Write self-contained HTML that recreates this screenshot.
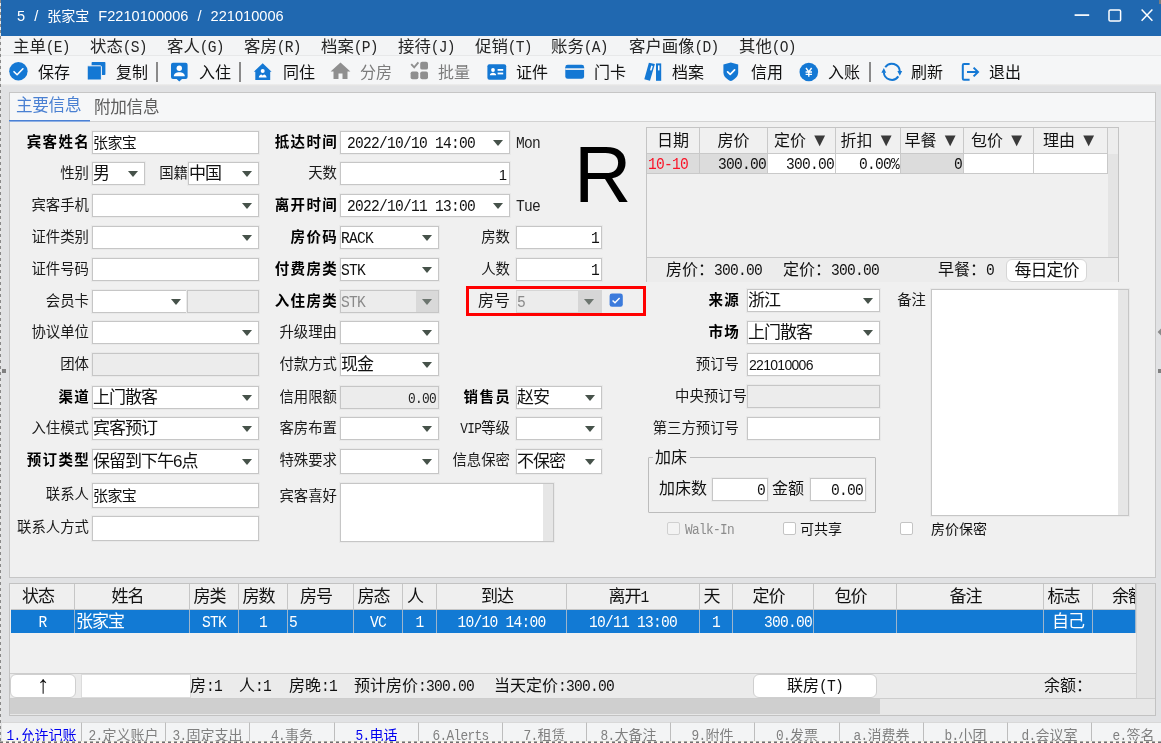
<!DOCTYPE html>
<html lang="zh-CN"><head><meta charset="utf-8"><title>5 / 张家宝 F2210100006 / 221010006</title>
<style>
*{box-sizing:border-box;margin:0;padding:0}
html,body{width:1161px;height:743px;overflow:hidden;background:#dcdcdc}
body{font-family:"Liberation Sans","Noto Sans CJK SC",sans-serif;color:#111;position:relative;font-size:14px}
#w{position:absolute;left:0;top:0;width:1161px;height:743px;overflow:hidden;background:#e1e2e4;will-change:transform}
#w div,#w span.a{position:absolute;white-space:nowrap}
.s{font-family:"Liberation Mono","Noto Sans CJK SC",monospace}
.m{font-family:"Liberation Mono",monospace;font-size:14.6px;letter-spacing:-.76px;display:inline-block;transform:scaleY(1.18);transform-origin:50% 58%}
.m14{font-family:"Liberation Mono",monospace;font-size:12.8px;letter-spacing:-.68px;display:inline-block;transform:scaleY(1.16);transform-origin:50% 58%}
.l{height:24px;line-height:24px;font-size:14.4px;text-align:right;color:#1a1a1a;font-weight:400;margin-right:-1px}
.l.b{font-weight:700;font-size:14.5px;letter-spacing:1.3px;color:#000;margin-right:-2px}
.l.g{font-size:16px}
.i{background:#fff;border:1px solid #c6c6c6;font-size:17px;letter-spacing:-1px;line-height:21px;height:23px;padding-left:0;color:#111;box-shadow:0 0 0 1px #e9e9e9}
.i.d{background:#ececec;color:#8a8a8a}
.i.r{text-align:right;padding-right:2px}
.i.f14{font-size:15px;letter-spacing:-.6px}
.ar{width:0;height:0;border-left:5px solid transparent;border-right:5px solid transparent;border-top:6px solid #46524a}
.tb{font-size:16px;height:30px;line-height:33px;top:56px;color:#111}
.tb.g{color:#7c7c7c}
.mi{font-size:16.4px;top:36px;height:20px;line-height:21px;color:#262626}
.th{font-size:16px;text-align:center;color:#111;background:#f0f0f0;border-right:1px solid #c9c9c9;border-bottom:1px solid #c9c9c9}
.td{font-size:16px;border-right:1px solid #c9c9c9;border-bottom:1px solid #c9c9c9}
.cb{width:13px;height:13px;background:#fff;border:1px solid #c4c4c4;border-radius:2px}
.bt{font-size:14px;color:#808080;top:722px;height:22px;line-height:25px;border-top:1px solid #d8d8d8;text-align:center;border-left:1px solid #bdbdbd;background:#f3f4f5}
.bt.on{color:#0000f0}
.gh{font-size:17px;letter-spacing:-1px;padding-right:9px;text-align:center;top:584px;height:26px;line-height:25px;background:#efefef;border-right:1px solid #c6c6c6;border-bottom:1px solid #c6c6c6;color:#111}
.gr{font-size:17px;letter-spacing:-1px;text-align:center;top:610px;height:23px;line-height:23px;background:#127ad4;border-right:1px solid #9db5cc;color:#fff}
</style></head><body><div id="w">
<div style="left:0px;top:0px;width:1161px;height:36px;background:#2068b0"></div>
<div style="left:1159px;top:0px;width:2px;height:4px;background:#7d7d7d"></div>
<div style="left:17px;top:0;height:34px;line-height:33px;font-size:14.6px;color:#fff;word-spacing:5px">5 / <span style="font-size:14px">张家宝</span> F2210100006 / 221010006</div>
<svg style="position:absolute;left:1070px;top:5px" width="88" height="24" viewBox="0 0 88 24"><path d="M4.6 10.1h14.6" stroke="#fff" stroke-width="1.7" fill="none"/><rect x="39" y="4.9" width="11.6" height="11.2" rx="1.4" stroke="#fff" stroke-width="1.5" fill="none"/><path d="M71.6 4.6l10.8 11.2M82.4 4.600l-10.800 11.200" stroke="#fff" stroke-width="1.5" fill="none"/></svg>
<div style="left:0px;top:36px;width:1161px;height:20px;background:#f3f4f5;border-bottom:1px solid #e7e8e9"></div>
<div class="mi" style="left:13px">主单<span class="m">(E)</span></div>
<div class="mi" style="left:90px">状态<span class="m">(S)</span></div>
<div class="mi" style="left:167px">客人<span class="m">(G)</span></div>
<div class="mi" style="left:244px">客房<span class="m">(R)</span></div>
<div class="mi" style="left:321px">档案<span class="m">(P)</span></div>
<div class="mi" style="left:398px">接待<span class="m">(J)</span></div>
<div class="mi" style="left:475px">促销<span class="m">(T)</span></div>
<div class="mi" style="left:551px">账务<span class="m">(A)</span></div>
<div class="mi" style="left:629px">客户画像<span class="m">(D)</span></div>
<div class="mi" style="left:739px">其他<span class="m">(O)</span></div>
<div style="left:0px;top:56px;width:1161px;height:30px;background:#f5f6f7"></div>
<div style="left:0px;top:84px;width:1161px;height:2px;background:linear-gradient(#efefef,#e2e2e2)"></div>
<div style="left:0px;top:86px;width:1161px;height:6px;background:#e1e2e4"></div>
<div class="tb" style="left:38px">保存</div>
<div class="tb" style="left:116px">复制</div>
<div class="tb" style="left:199px">入住</div>
<div class="tb" style="left:283px">同住</div>
<div class="tb g" style="left:360px">分房</div>
<div class="tb g" style="left:438px">批量</div>
<div class="tb" style="left:516px">证件</div>
<div class="tb" style="left:594px">门卡</div>
<div class="tb" style="left:672px">档案</div>
<div class="tb" style="left:751px">信用</div>
<div class="tb" style="left:828px">入账</div>
<div class="tb" style="left:911px">刷新</div>
<div class="tb" style="left:989px">退出</div>
<div style="left:156px;top:62px;width:2px;height:20px;background:#8a8a8a"></div>
<div style="left:239px;top:62px;width:2px;height:20px;background:#8a8a8a"></div>
<div style="left:869px;top:62px;width:2px;height:20px;background:#8a8a8a"></div>
<svg style="position:absolute;left:9px;top:62px" width="19" height="19" viewBox="0 0 19 19"><circle cx="9.4" cy="9.3" r="9.2" fill="#1478d4"/><path d="M5 9.7l3.1 3 5.8-5.9" stroke="#fff" stroke-width="1.6" fill="none" stroke-linecap="round" stroke-linejoin="round"/></svg>
<svg style="position:absolute;left:87px;top:61px" width="20" height="20" viewBox="0 0 20 20"><rect x="4.6" y="1" width="13.8" height="13" rx="0.8" fill="#1478d4"/><rect x="0.2" y="4.8" width="14.2" height="14.2" rx="1" fill="#1478d4" stroke="#f6f6f7" stroke-width="1"/></svg>
<svg style="position:absolute;left:170px;top:62px" width="19" height="20" viewBox="0 0 19 20"><path d="M3 0.8h12.6a2 2 0 0 1 2 2v12.2a2 2 0 0 1-2 2h-3.6l-2.7 2.6-2.7-2.6H3a2 2 0 0 1-2-2V2.8a2 2 0 0 1 2-2z" fill="#1478d4"/><circle cx="9.3" cy="6.3" r="2.7" fill="#fff"/><path d="M3.8 14.2c0-2.6 2.6-3.9 5.5-3.9s5.5 1.3 5.5 3.9z" fill="#fff"/></svg>
<svg style="position:absolute;left:253px;top:62px" width="20" height="19" viewBox="0 0 20 19"><path d="M9.7 1.2L0.8 9.8H2.3V18H17.2V9.8H18.6z" fill="#1478d4"/><circle cx="9.7" cy="9" r="2" fill="#fff"/><path d="M5.8 15.6c0-2 1.3-3 2.6-3.2l1.3 1 1.3-1c1.3.2 2.6 1.2 2.6 3.2z" fill="#fff"/></svg>
<svg style="position:absolute;left:330px;top:62px" width="21" height="18" viewBox="0 0 21 18"><path d="M10.5 0.6L0.6 9.4h2.9V17h5V11.6h4V17h5V9.4h2.9z" fill="#8f8f8f"/></svg>
<svg style="position:absolute;left:410px;top:61px" width="19" height="19" viewBox="0 0 19 19"><path d="M1.2 3.2l3 3.2 4.2-5" stroke="#8f8f8f" stroke-width="1.9" fill="none"/><rect x="10.2" y="0.8" width="7.8" height="7.8" rx="1.9" fill="#8f8f8f"/><rect x="0.6" y="10.4" width="7.8" height="7.8" rx="1.9" fill="#8f8f8f"/><rect x="10.2" y="10.4" width="7.8" height="7.8" rx="1.9" fill="#8f8f8f"/></svg>
<svg style="position:absolute;left:487px;top:64px" width="20" height="16" viewBox="0 0 20 16"><rect x="0.4" y="0.3" width="18.8" height="15.4" rx="2" fill="#1478d4"/><circle cx="6" cy="6" r="1.9" fill="#fff"/><path d="M2.8 11.3c0-1.8 1.4-2.6 3.2-2.6s3.2.8 3.2 2.6z" fill="#fff"/><rect x="10.6" y="5" width="5.6" height="1.8" fill="#fff"/><rect x="10.6" y="8.6" width="5.6" height="1.8" fill="#fff"/></svg>
<svg style="position:absolute;left:565px;top:64px" width="20" height="15" viewBox="0 0 20 15"><rect x="0.3" y="0.8" width="18.8" height="14" rx="2.4" fill="#1478d4"/><rect x="0.3" y="4.3" width="18.8" height="1.6" fill="#f6f6f7"/></svg>
<svg style="position:absolute;left:643px;top:62px" width="20" height="19" viewBox="0 0 20 19"><path d="M5.9 0.7l6 1.4-4.9 16.7-5.7-1.6z" fill="#1478d4"/><rect x="13" y="1.4" width="5.2" height="17.4" fill="#1478d4"/><rect x="15" y="3.4" width="1.5" height="5" fill="#fff"/><path d="M8.3 3.6l1.5.4-1.3 4.6-1.5-.4z" fill="#fff"/></svg>
<svg style="position:absolute;left:722px;top:62px" width="18" height="20" viewBox="0 0 18 20"><path d="M8.8 0.4L1.4 2.6v7.6c0 4.2 3.2 7 7.4 8.9 4.2-1.9 7.4-4.7 7.4-8.9V2.6z" fill="#1478d4"/><path d="M5.6 9.8l2.6 2.6 4.4-4.6" stroke="#fff" stroke-width="1.7" fill="none" stroke-linecap="round" stroke-linejoin="round"/></svg>
<svg style="position:absolute;left:799px;top:62px" width="20" height="20" viewBox="0 0 20 20"><circle cx="9.8" cy="10" r="9.3" fill="#1478d4"/><path d="M7 6l2.8 3.8L12.6 6M6.6 10h6.4M6.6 12.4h6.4M9.8 9.8v5" stroke="#fff" stroke-width="1.4" fill="none"/></svg>
<svg style="position:absolute;left:881px;top:61px" width="22" height="22" viewBox="0 0 22 22"><path d="M4.25 6.2A8 8 0 0 1 18.8 10.3M17.35 15.4A8 8 0 0 1 2.8 11.3" stroke="#1478d4" stroke-width="2" fill="none"/><path d="M16.4 10h4.8l-2.4 4.8z" fill="#1478d4"/><path d="M0.4 11.7h4.8l-2.4-4.8z" fill="#1478d4"/></svg>
<svg style="position:absolute;left:961px;top:62px" width="19" height="20" viewBox="0 0 19 20"><path d="M8.6 2H3a1.2 1.2 0 0 0-1.200 1.200V16.600A1.200 1.200 0 0 0 3 17.800H8.600" stroke="#1478d4" stroke-width="2" fill="none"/><path d="M6 10h10.600M12.600 5.600l4.400 4.400-4.400 4.400" stroke="#1478d4" stroke-width="2" fill="none"/></svg>
<div style="left:9px;top:92px;width:1147px;height:486px;background:#f0f0f0;border:1px solid #c6c6c6"></div>
<div style="left:10px;top:93px;width:1145px;height:28px;background:#f6f7f8"></div>
<div style="left:10px;top:121px;width:1145px;height:1px;background:#d2d2d2"></div>
<div style="left:9px;top:120px;width:81px;height:1px;background:#4a80d4"></div>
<div style="left:9px;top:121px;width:81px;height:1px;background:#8fb0e4"></div>
<div style="left:16px;top:94px;height:24px;line-height:24px;font-size:16.6px;letter-spacing:-.3px;color:#4a80d2">主要信息</div>
<div style="left:94px;top:96px;height:24px;line-height:24px;font-size:16.6px;letter-spacing:-.3px;color:#5c5c5c">附加信息</div>
<div class="l b" style="right:1073px;top:130px;height:24px;line-height:24px">宾客姓名</div>
<div class="i f14" style="left:92px;top:131px;width:167px;height:23px;line-height:22px;">张家宝</div>
<div class="l" style="right:1073px;top:161px;height:24px;line-height:24px">性别</div>
<div class="i" style="left:92px;top:162px;width:53px;height:23px;line-height:22px;">男<div class="ar" style="right:6.5px;top:8px"></div></div>
<div class="l" style="right:974px;top:161px;height:24px;line-height:24px">国籍</div>
<div class="i" style="left:188px;top:162px;width:71px;height:23px;line-height:22px;">中国<div class="ar" style="right:6.5px;top:8px"></div></div>
<div class="l" style="right:1073px;top:193px;height:24px;line-height:24px">宾客手机</div>
<div class="i" style="left:92px;top:194px;width:167px;height:23px;line-height:22px;"><div class="ar" style="right:6.5px;top:8px"></div></div>
<div class="l" style="right:1073px;top:225px;height:24px;line-height:24px">证件类别</div>
<div class="i" style="left:92px;top:226px;width:167px;height:23px;line-height:22px;"><div class="ar" style="right:6.5px;top:8px"></div></div>
<div class="l" style="right:1073px;top:257px;height:24px;line-height:24px">证件号码</div>
<div class="i" style="left:92px;top:258px;width:167px;height:23px;line-height:22px;"></div>
<div class="l" style="right:1073px;top:289px;height:24px;line-height:24px">会员卡</div>
<div class="i" style="left:92px;top:290px;width:96px;height:23px;line-height:22px;"><div class="ar" style="right:6.5px;top:8px"></div></div>
<div class="i d" style="left:187px;top:290px;width:72px;height:23px;line-height:22px;"></div>
<div class="l" style="right:1073px;top:320px;height:24px;line-height:24px">协议单位</div>
<div class="i" style="left:92px;top:321px;width:167px;height:23px;line-height:22px;"><div class="ar" style="right:6.5px;top:8px"></div></div>
<div class="l" style="right:1073px;top:352px;height:24px;line-height:24px">团体</div>
<div class="i d" style="left:92px;top:353px;width:167px;height:23px;line-height:22px;"></div>
<div class="l b" style="right:1073px;top:385px;height:24px;line-height:24px">渠道</div>
<div class="i" style="left:92px;top:386px;width:167px;height:23px;line-height:22px;">上门散客<div class="ar" style="right:6.5px;top:8px"></div></div>
<div class="l" style="right:1073px;top:416px;height:24px;line-height:24px">入住模式</div>
<div class="i" style="left:92px;top:417px;width:167px;height:23px;line-height:22px;">宾客预订<div class="ar" style="right:6.5px;top:8px"></div></div>
<div class="l b" style="right:1073px;top:448px;height:24px;line-height:24px">预订类型</div>
<div class="i" style="left:92px;top:449px;width:167px;height:25px;line-height:24px;">保留到下午6点<div class="ar" style="right:6.5px;top:9px"></div></div>
<div class="l" style="right:1073px;top:482px;height:24px;line-height:24px">联系人</div>
<div class="i f14" style="left:92px;top:483px;width:167px;height:25px;line-height:24px;">张家宝</div>
<div class="l" style="right:1073px;top:515px;height:24px;line-height:24px">联系人方式</div>
<div class="i" style="left:92px;top:516px;width:167px;height:25px;line-height:24px;"></div>
<div class="l b" style="right:825px;top:130px;height:24px;line-height:24px">抵达时间</div>
<div class="i" style="left:340px;top:131px;width:170px;height:23px;line-height:22px;padding-left:6px"><span class="m">2022/10/10 14:00</span><div class="ar" style="right:6.5px;top:8px"></div></div>
<div style="left:516px;top:131px;height:24px;line-height:24px;font-size:16px;color:#222"><span class="m">Mon</span></div>
<div class="l" style="right:825px;top:161px;height:24px;line-height:24px">天数</div>
<div class="i r f14" style="left:340px;top:162px;width:170px;height:23px;line-height:22px;padding-right:2px;letter-spacing:0;line-height:24px">1</div>
<div class="l b" style="right:825px;top:193px;height:24px;line-height:24px">离开时间</div>
<div class="i" style="left:340px;top:194px;width:170px;height:23px;line-height:22px;padding-left:6px"><span class="m">2022/10/11 13:00</span><div class="ar" style="right:6.5px;top:8px"></div></div>
<div style="left:516px;top:194px;height:24px;line-height:24px;font-size:16px;color:#222"><span class="m">Tue</span></div>
<div class="l b" style="right:825px;top:225px;height:24px;line-height:24px">房价码</div>
<div class="i" style="left:340px;top:226px;width:99px;height:23px;line-height:22px;"><span class="m">RACK</span><div class="ar" style="right:6.5px;top:8px"></div></div>
<div class="l b" style="right:825px;top:257px;height:24px;line-height:24px">付费房类</div>
<div class="i" style="left:340px;top:258px;width:99px;height:23px;line-height:22px;"><span class="m">STK</span><div class="ar" style="right:6.5px;top:8px"></div></div>
<div class="l b" style="right:825px;top:289px;height:24px;line-height:24px">入住房类</div>
<div class="i d" style="left:340px;top:290px;width:99px;height:23px;line-height:22px;"><span class="m">STK</span><div class="ar" style="right:6.5px;top:8px"></div></div>
<div style="left:416px;top:291px;width:22px;height:21px;background:#d9d9d9"></div>
<div class="ar" style="left:422px;top:299px;border-top-color:#6c756f"></div>
<div class="l" style="right:825px;top:320px;height:24px;line-height:24px">升级理由</div>
<div class="i" style="left:340px;top:321px;width:99px;height:23px;line-height:22px;"><div class="ar" style="right:6.5px;top:8px"></div></div>
<div class="l" style="right:825px;top:352px;height:24px;line-height:24px">付款方式</div>
<div class="i" style="left:340px;top:353px;width:99px;height:23px;line-height:22px;">现金<div class="ar" style="right:6.5px;top:8px"></div></div>
<div class="l" style="right:825px;top:385px;height:24px;line-height:24px">信用限额</div>
<div class="i d r" style="left:340px;top:386px;width:99px;height:23px;line-height:22px;color:#222"><span class="m14">0.00</span></div>
<div class="l" style="right:825px;top:416px;height:24px;line-height:24px">客房布置</div>
<div class="i" style="left:340px;top:417px;width:99px;height:23px;line-height:22px;"><div class="ar" style="right:6.5px;top:8px"></div></div>
<div class="l" style="right:825px;top:448px;height:24px;line-height:24px">特殊要求</div>
<div class="i" style="left:340px;top:449px;width:99px;height:25px;line-height:24px;"><div class="ar" style="right:6.5px;top:9px"></div></div>
<div class="l" style="right:825px;top:484px;height:24px;line-height:24px">宾客喜好</div>
<div class="i" style="left:340px;top:483px;width:214px;height:59px;line-height:58px;"></div>
<div style="left:543px;top:484px;width:10px;height:57px;background:#e6e6e6"></div>
<div class="l" style="right:652px;top:225px;height:24px;line-height:24px">房数</div>
<div class="i r" style="left:516px;top:226px;width:86px;height:23px;line-height:22px;"><span class="m">1</span></div>
<div class="l" style="right:652px;top:257px;height:24px;line-height:24px">人数</div>
<div class="i r" style="left:516px;top:258px;width:86px;height:23px;line-height:22px;"><span class="m">1</span></div>
<div style="left:466px;top:286px;width:180px;height:30px;border:3px solid #ff0000"></div>
<div class="l g" style="right:652px;top:289px;height:24px;line-height:24px">房号</div>
<div class="i d" style="left:516px;top:290px;width:86px;height:23px;line-height:22px;box-shadow:none;border-color:#d6d6d6"><span class="m">5</span></div>
<div style="left:578px;top:291px;width:23px;height:21px;background:#d6d6d6"></div>
<div class="ar" style="left:584px;top:299px;border-top-color:#6c756f"></div>
<svg style="position:absolute;left:609px;top:293px" width="14" height="15" viewBox="0 0 14 15"><rect x="0.6" y="0.5" width="13.2" height="13.3" rx="2.4" fill="#3c7bdc"/><path d="M3.6 7.4l2.4 2.4 4.6-4.8" stroke="#fff" stroke-width="1.4" fill="none"/></svg>
<div class="l b" style="right:652px;top:385px;height:24px;line-height:24px">销售员</div>
<div class="i" style="left:516px;top:386px;width:86px;height:23px;line-height:22px;">赵安<div class="ar" style="right:6.5px;top:8px"></div></div>
<div class="l" style="right:652px;top:416px;height:24px;line-height:24px"><span class="m14">VIP</span>等级</div>
<div class="i" style="left:516px;top:417px;width:86px;height:23px;line-height:22px;"><div class="ar" style="right:6.5px;top:8px"></div></div>
<div class="l" style="right:652px;top:448px;height:24px;line-height:24px">信息保密</div>
<div class="i" style="left:516px;top:449px;width:86px;height:25px;line-height:24px;">不保密<div class="ar" style="right:6.5px;top:9px"></div></div>
<div style="left:646px;top:127px;width:473px;height:155px;background:#f0f0f0;border:1px solid #c4c4c4;border-bottom:none"></div>
<div class="th" style="left:647px;top:128px;width:53px;height:26px;line-height:26px">日期</div>
<div class="th" style="left:700px;top:128px;width:68px;height:26px;line-height:26px">房价</div>
<div class="th" style="left:768px;top:128px;width:68px;height:26px;line-height:26px">定价 <span style="font-size:18.5px;color:#3a3a3a;position:relative;top:0px;line-height:10px">▼</span></div>
<div class="th" style="left:836px;top:128px;width:65px;height:26px;line-height:26px">折扣 <span style="font-size:18.5px;color:#3a3a3a;position:relative;top:0px;line-height:10px">▼</span></div>
<div class="th" style="left:901px;top:128px;width:63px;height:26px;line-height:26px">早餐 <span style="font-size:18.5px;color:#3a3a3a;position:relative;top:0px;line-height:10px">▼</span></div>
<div class="th" style="left:964px;top:128px;width:70px;height:26px;line-height:26px">包价 <span style="font-size:18.5px;color:#3a3a3a;position:relative;top:0px;line-height:10px">▼</span></div>
<div class="th" style="left:1034px;top:128px;width:74px;height:26px;line-height:26px">理由 <span style="font-size:18.5px;color:#3a3a3a;position:relative;top:0px;line-height:10px">▼</span></div>
<div class="td" style="left:647px;top:154px;width:53px;height:20px;background:#dcdcdc;color:#fa1428;text-align:left;line-height:19px;padding:0 1px"><span class="m">10-10</span></div>
<div class="td" style="left:700px;top:154px;width:68px;height:20px;background:#dcdcdc;color:#111;text-align:right;line-height:19px;padding:0 1px"><span class="m">300.00</span></div>
<div class="td" style="left:768px;top:154px;width:68px;height:20px;background:#fff;color:#111;text-align:right;line-height:19px;padding:0 1px"><span class="m">300.00</span></div>
<div class="td" style="left:836px;top:154px;width:65px;height:20px;background:#fff;color:#111;text-align:right;line-height:19px;padding:0 1px"><span class="m">0.00%</span></div>
<div class="td" style="left:901px;top:154px;width:63px;height:20px;background:#dcdcdc;color:#111;text-align:right;line-height:19px;padding:0 1px"><span class="m">0</span></div>
<div class="td" style="left:964px;top:154px;width:70px;height:20px;background:#fff;color:#111;text-align:right;line-height:19px;padding:0 1px"></div>
<div class="td" style="left:1034px;top:154px;width:74px;height:20px;background:#fff;color:#111;text-align:right;line-height:19px;padding:0 1px"></div>
<div style="left:1108px;top:128px;width:10px;height:129px;background:#e4e4e4"></div>
<div style="left:1108px;top:128px;width:10px;height:26px;background:#ededed"></div>
<div style="left:647px;top:257px;width:471px;height:25px;background:#ececec;border-top:1px solid #c9c9c9"></div>
<div style="left:666px;top:258px;height:24px;line-height:24px;font-size:16px">房价：<span class="m">300.00</span></div>
<div style="left:783px;top:258px;height:24px;line-height:24px;font-size:16px">定价：<span class="m">300.00</span></div>
<div style="left:938px;top:258px;height:24px;line-height:24px;font-size:16px">早餐：<span class="m">0</span></div>
<div style="left:1006px;top:259px;width:81px;height:23px;background:#fff;border:1px solid #d6d6d6;border-radius:6px;font-size:17px;letter-spacing:-1px;line-height:22px;text-align:center">每日定价</div>
<div class="l b" style="right:423px;top:288px;height:24px;line-height:24px">来源</div>
<div class="i" style="left:747px;top:289px;width:133px;height:23px;line-height:22px;">浙江<div class="ar" style="right:6.5px;top:8px"></div></div>
<div class="l b" style="right:423px;top:320px;height:24px;line-height:24px">市场</div>
<div class="i" style="left:747px;top:321px;width:133px;height:23px;line-height:22px;">上门散客<div class="ar" style="right:6.5px;top:8px"></div></div>
<div class="l" style="right:423px;top:352px;height:24px;line-height:24px">预订号</div>
<div class="i" style="left:747px;top:353px;width:133px;height:23px;line-height:22px;padding-left:1px"><span style="font-size:14px;letter-spacing:-.7px">221010006</span></div>
<div class="l" style="right:415px;top:384px;height:24px;line-height:24px">中央预订号</div>
<div class="i d" style="left:747px;top:385px;width:133px;height:23px;line-height:22px;"></div>
<div class="l" style="right:423px;top:416px;height:24px;line-height:24px">第三方预订号</div>
<div class="i" style="left:747px;top:417px;width:133px;height:23px;line-height:22px;"></div>
<div class="l" style="right:236px;top:288px;height:24px;line-height:24px">备注</div>
<div class="i" style="left:931px;top:289px;width:198px;height:227px;line-height:226px;"></div>
<div style="left:1118px;top:290px;width:10px;height:225px;background:#e6e6e6"></div>
<div style="left:648px;top:457px;width:228px;height:56px;border:1px solid #bcbcbc;border-radius:1px"></div>
<div style="left:653px;top:446px;height:24px;line-height:24px;font-size:16px;background:#f0f0f0;padding:0 3px 0 2px">加床</div>
<div style="left:659px;top:477px;height:24px;line-height:24px;font-size:16px">加床数</div>
<div class="i r" style="left:712px;top:478px;width:56px;height:23px;line-height:22px;padding-right:2px"><span class="m">0</span></div>
<div style="left:772px;top:477px;height:24px;line-height:24px;font-size:16px">金额</div>
<div class="i r" style="left:810px;top:478px;width:56px;height:23px;line-height:22px;padding-right:2px"><span class="m">0.00</span></div>
<div class="cb" style="left:667px;top:522px;width:13px;height:13px;background:#f3f3f3;border-color:#d0d0d0"></div>
<div style="left:685px;top:517px;height:24px;line-height:24px;font-size:14px;color:#8c8c8c"><span class="m14">Walk-In</span></div>
<div class="cb" style="left:783px;top:522px;width:13px;height:13px;"></div>
<div style="left:800px;top:517px;height:24px;line-height:24px;font-size:14px">可共享</div>
<div class="cb" style="left:900px;top:522px;width:13px;height:13px;"></div>
<div style="left:931px;top:517px;height:24px;line-height:24px;font-size:14px">房价保密</div>
<div style="left:574px;top:133px;font-size:79.5px;line-height:84px;height:84px;color:#000;font-family:'Liberation Sans',sans-serif">R</div>
<div style="left:9px;top:583px;width:1147px;height:133px;background:#f0f0f0;border:1px solid #c2c2c2"></div>
<div class="gh" style="left:11px;top:584px;width:64px;height:26px;">状态</div>
<div class="gr" style="left:11px;top:610px;width:64px;height:23px;"><span class="m">R</span></div>
<div class="gh" style="left:75px;top:584px;width:115px;height:26px;">姓名</div>
<div class="gr" style="left:75px;top:610px;width:115px;height:23px;text-align:left;padding-left:1px">张家宝</div>
<div class="gh" style="left:190px;top:584px;width:49px;height:26px;">房类</div>
<div class="gr" style="left:190px;top:610px;width:49px;height:23px;"><span class="m">STK</span></div>
<div class="gh" style="left:239px;top:584px;width:49px;height:26px;">房数</div>
<div class="gr" style="left:239px;top:610px;width:49px;height:23px;"><span class="m">1</span></div>
<div class="gh" style="left:288px;top:584px;width:66px;height:26px;">房号</div>
<div class="gr" style="left:288px;top:610px;width:66px;height:23px;text-align:left;padding-left:1px"><span class="m">5</span></div>
<div class="gh" style="left:354px;top:584px;width:49px;height:26px;">房态</div>
<div class="gr" style="left:354px;top:610px;width:49px;height:23px;"><span class="m">VC</span></div>
<div class="gh" style="left:403px;top:584px;width:34px;height:26px;">人</div>
<div class="gr" style="left:403px;top:610px;width:34px;height:23px;"><span class="m">1</span></div>
<div class="gh" style="left:437px;top:584px;width:130px;height:26px;">到达</div>
<div class="gr" style="left:437px;top:610px;width:130px;height:23px;"><span class="m">10/10 14:00</span></div>
<div class="gh" style="left:567px;top:584px;width:133px;height:26px;">离开<span class="m">1</span></div>
<div class="gr" style="left:567px;top:610px;width:133px;height:23px;"><span class="m">10/11 13:00</span></div>
<div class="gh" style="left:700px;top:584px;width:33px;height:26px;">天</div>
<div class="gr" style="left:700px;top:610px;width:33px;height:23px;"><span class="m">1</span></div>
<div class="gh" style="left:733px;top:584px;width:81px;height:26px;">定价</div>
<div class="gr" style="left:733px;top:610px;width:81px;height:23px;text-align:right;padding-right:1px"><span class="m">300.00</span></div>
<div class="gh" style="left:814px;top:584px;width:83px;height:26px;">包价</div>
<div class="gr" style="left:814px;top:610px;width:83px;height:23px;"></div>
<div class="gh" style="left:897px;top:584px;width:147px;height:26px;">备注</div>
<div class="gr" style="left:897px;top:610px;width:147px;height:23px;"></div>
<div class="gh" style="left:1044px;top:584px;width:49px;height:26px;">标志</div>
<div class="gr" style="left:1044px;top:610px;width:49px;height:23px;">自己</div>
<div class="gh" style="left:1093px;top:584px;width:43px;height:26px;text-align:left;padding-left:19px;padding-right:0;overflow:hidden">余额</div>
<div class="gr" style="left:1093px;top:610px;width:43px;height:23px;"></div>
<div style="left:10px;top:673px;width:1126px;height:25px;background:#ebebeb;border-top:1px solid #cdcdcd"></div>
<div style="left:10px;top:674px;width:66px;height:24px;background:#fff;border:1px solid #cfcfcf;border-radius:6px;text-align:center;font-size:25px;line-height:19px;font-family:'Liberation Sans',sans-serif">↑</div>
<div style="left:81px;top:674px;width:110px;height:24px;background:#fff;border:1px solid #dcdcdc"></div>
<div style="left:190px;top:674px;height:24px;line-height:24px;font-size:16px">房<span class="m">:1</span></div>
<div style="left:239px;top:674px;height:24px;line-height:24px;font-size:16px">人<span class="m">:1</span></div>
<div style="left:289px;top:674px;height:24px;line-height:24px;font-size:16px">房晚<span class="m">:1</span></div>
<div style="left:354px;top:674px;height:24px;line-height:24px;font-size:16px">预计房价<span class="m">:300.00</span></div>
<div style="left:494px;top:674px;height:24px;line-height:24px;font-size:16px">当天定价<span class="m">:300.00</span></div>
<div style="left:753px;top:674px;width:124px;height:24px;background:#fff;border:1px solid #cfcfcf;border-radius:6px;text-align:center;font-size:16px;line-height:21px">联房<span class="m">(T)</span></div>
<div style="left:1044px;top:674px;height:24px;line-height:24px;font-size:16px">余额：</div>
<div style="left:1136px;top:584px;width:19px;height:114px;background:#e4e4e4;border-left:1px solid #d4d4d4"></div>
<div style="left:10px;top:698px;width:1145px;height:17px;background:#e7e7e7;border-top:1px solid #cdcdcd"></div>
<div style="left:10px;top:699px;width:870px;height:15px;background:#cfcfcf"></div>
<div style="left:0px;top:716px;width:1161px;height:27px;background:#e1e2e4"></div>
<div class="bt on" style="left:2px;top:722px;width:79px;height:22px;border-left:none"><span class="m14">1.</span>允许记账</div>
<div class="bt" style="left:81px;top:722px;width:84px;height:22px;"><span class="m14">2.</span>定义账户</div>
<div class="bt" style="left:165px;top:722px;width:84px;height:22px;"><span class="m14">3.</span>固定支出</div>
<div class="bt" style="left:249px;top:722px;width:85px;height:22px;"><span class="m14">4.</span>事务</div>
<div class="bt on" style="left:334px;top:722px;width:84px;height:22px;"><span class="m14">5.</span>电话</div>
<div class="bt" style="left:418px;top:722px;width:84px;height:22px;"><span class="m14">6.Alerts</span></div>
<div class="bt" style="left:502px;top:722px;width:84px;height:22px;"><span class="m14">7.</span>租赁</div>
<div class="bt" style="left:586px;top:722px;width:84px;height:22px;"><span class="m14">8.</span>大备注</div>
<div class="bt" style="left:670px;top:722px;width:84px;height:22px;"><span class="m14">9.</span>附件</div>
<div class="bt" style="left:754px;top:722px;width:85px;height:22px;"><span class="m14">0.</span>发票</div>
<div class="bt" style="left:839px;top:722px;width:84px;height:22px;"><span class="m14">a.</span>消费券</div>
<div class="bt" style="left:923px;top:722px;width:84px;height:22px;"><span class="m14">b.</span>小团</div>
<div class="bt" style="left:1007px;top:722px;width:84px;height:22px;"><span class="m14">d.</span>会议室</div>
<div class="bt" style="left:1091px;top:722px;width:84px;height:22px;"><span class="m14">e.</span>签名</div>
<div style="left:0px;top:0px;width:1px;height:743px;background:repeating-linear-gradient(#8a8a8a 0 3px,#e8e8e8 3px 6px)"></div>
<div style="left:0px;top:741px;width:1161px;height:1px;background:repeating-linear-gradient(90deg,#a8a8a8 0 3px,#f4f0e0 3px 6px)"></div>
<div style="left:0px;top:742px;width:1161px;height:1px;background:repeating-linear-gradient(90deg,#6e6e6e 0 3px,#fbfbf6 3px 6px)"></div>
<svg style="position:absolute;left:1157px;top:328px" width="4" height="8" viewBox="0 0 4 8"><path d="M4 0.500L0.600 4 4 7.500z" fill="#8a8a8a"/></svg>
<div style="left:1158px;top:369px;width:3px;height:4px;background:#808080"></div>
<div style="left:2px;top:369px;width:4px;height:4px;background:#808080"></div>
</div></body></html>
